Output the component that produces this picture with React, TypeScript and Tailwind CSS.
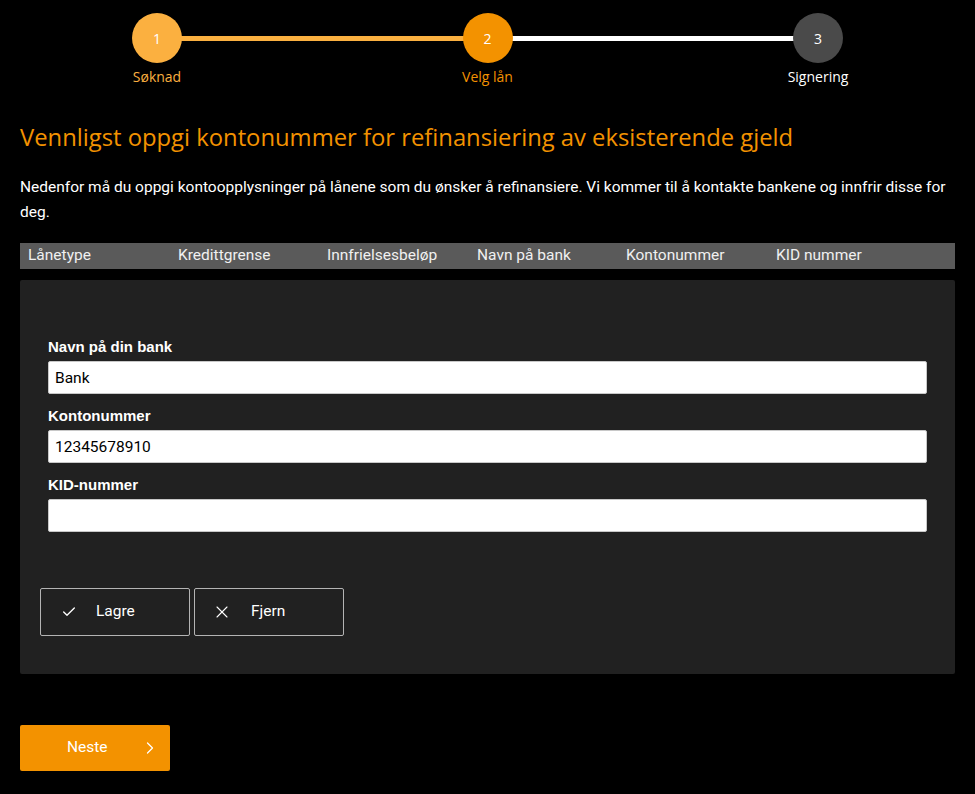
import React from 'react';
import { Check, X, ChevronRight } from 'lucide-react';

const steps = [
  { n: 1, label: 'Søknad', circle: 'bg-[#fbb040]', text: 'text-[#fbb040]' },
  { n: 2, label: 'Velg lån', circle: 'bg-[#f39200]', text: 'text-[#f39200]' },
  { n: 3, label: 'Signering', circle: 'bg-[#4a4a4a]', text: 'text-white' },
];

const columns = ['Lånetype', 'Kredittgrense', 'Innfrielsesbeløp', 'Navn på bank', 'Kontonummer', 'KID nummer'];

const fields = [
  { label: 'Navn på din bank', value: 'Bank' },
  { label: 'Kontonummer', value: '12345678910' },
  { label: 'KID-nummer', value: '' },
];

const Stepper: React.FC = () => (
  <div className="relative mx-auto h-[100px] w-[711px] pt-[13px]">
    <div className="absolute left-[25px] top-[36px] h-[5px] w-[330px] bg-[#fbb040]" />
    <div className="absolute left-[355px] top-[36px] h-[5px] w-[331px] bg-white" />
    <div className="relative flex justify-between">
      {steps.map((s) => (
        <div key={s.n} className="flex w-[50px] flex-col items-center">
          <div className={`flex h-[50px] w-[50px] items-center justify-center rounded-full text-[14px] font-medium text-white ${s.circle}`}>
            {s.n}
          </div>
          <span className={`mt-[3px] whitespace-nowrap text-[14px] font-medium ${s.text}`}>{s.label}</span>
        </div>
      ))}
    </div>
  </div>
);

export default function App() {
  return (
    <div className="min-h-[794px] bg-black px-[20px] font-['Open_Sans',sans-serif] text-white">
      <Stepper />

      <h1 className="mt-[22px] text-[23.8px] leading-[30px] text-[#f39200]">
        Vennligst oppgi kontonummer for refinansiering av eksisterende gjeld
      </h1>

      <p className="mt-[23px] font-['Roboto',sans-serif] text-[15.5px] leading-[25px]">
        Nedenfor må du oppgi kontoopplysninger på lånene som du ønsker å refinansiere. Vi kommer til å kontakte bankene og innfrir disse for deg.
      </p>

      <div className="mt-[18px] grid h-[26px] grid-cols-[150px_149px_150px_149px_150px_1fr] items-center bg-[#5a5a5a] pl-[8px] font-['Roboto',sans-serif] text-[15.5px] text-[#f0f0f0]">
        {columns.map((c) => (
          <span key={c}>{c}</span>
        ))}
      </div>

      <div className="mt-[11px] h-[394px] rounded-[2px] bg-[#212121] px-[28px] pt-[57px]">
        <div className="flex flex-col gap-[12px]">
          {fields.map((f) => (
            <div key={f.label} className="flex flex-col">
              <label className="mb-[4px] font-['Liberation_Sans',sans-serif] text-[15px] font-bold leading-[20px]">{f.label}</label>
              <input
                readOnly
                value={f.value}
                className="h-[33px] w-full rounded-[2px] border border-[#c8c8c8] bg-white px-[6px] font-['Roboto',sans-serif] text-[15.5px] text-black outline-none"
              />
            </div>
          ))}
        </div>

        <div className="ml-[-8px] mt-[56px] flex gap-[4px] font-['Roboto',sans-serif] text-[15.5px]">
          <button className="flex h-[48px] w-[150px] items-center rounded-[2px] border border-[#b4b4b4] pl-[20px]">
            <Check size={16} strokeWidth={2} />
            <span className="ml-[19px]">Lagre</span>
          </button>
          <button className="flex h-[48px] w-[150px] items-center rounded-[2px] border border-[#b4b4b4] pl-[17px]">
            <X size={20} strokeWidth={1.3} />
            <span className="ml-[19px]">Fjern</span>
          </button>
        </div>
      </div>

      <button className="mt-[51px] flex h-[46px] w-[150px] items-center rounded-[2px] bg-[#f39200] pl-[47px] font-['Roboto',sans-serif] text-[15.5px]">
        <span>Neste</span>
        <ChevronRight size={20} strokeWidth={1.5} className="ml-[32px]" />
      </button>
    </div>
  );
}
